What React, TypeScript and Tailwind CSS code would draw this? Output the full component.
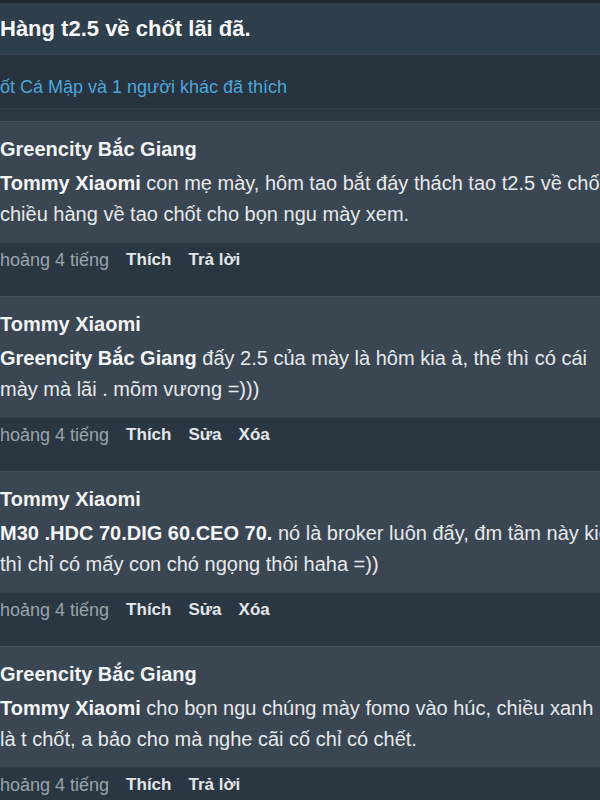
import React from 'react'

type Comment = {
  author: string
  mention: string
  lines: string[]
  actions: string[]
}

const comments: Comment[] = [
  {
    author: 'Greencity Bắc Giang',
    mention: 'Tommy Xiaomi',
    lines: ['con mẹ mày, hôm tao bắt đáy thách tao t2.5 về chốt', 'chiều hàng về tao chốt cho bọn ngu mày xem.'],
    actions: ['Thích', 'Trả lời'],
  },
  {
    author: 'Tommy Xiaomi',
    mention: 'Greencity Bắc Giang',
    lines: ['đấy 2.5 của mày là hôm kia à, thế thì có cái', 'mày mà lãi . mõm vương =)))'],
    actions: ['Thích', 'Sửa', 'Xóa'],
  },
  {
    author: 'Tommy Xiaomi',
    mention: 'M30 .HDC 70.DIG 60.CEO 70.',
    lines: ['nó là broker luôn đấy, đm tầm này kiếm', 'thì chỉ có mấy con chó ngọng thôi haha =))'],
    actions: ['Thích', 'Sửa', 'Xóa'],
  },
  {
    author: 'Greencity Bắc Giang',
    mention: 'Tommy Xiaomi',
    lines: ['cho bọn ngu chúng mày fomo vào húc, chiều xanh', 'là t chốt, a bảo cho mà nghe cãi cố chỉ có chết.'],
    actions: ['Thích', 'Trả lời'],
  },
]

const CommentItem: React.FC<{ c: Comment }> = ({ c }) => (
  <div>
    <div className="bg-[#3a4652] border-t border-[#43505b] pt-[12px] pb-[12px] whitespace-nowrap overflow-hidden">
      <div className="text-[20px] leading-[31px] font-bold text-[#f1f3f5]">{c.author}</div>
      <div className="mt-[3px] text-[20px] leading-[31px] text-[#e6e9ec]">
        <div>
          <span className="font-bold text-[#f4f6f8]">{c.mention}</span> {c.lines[0]}
        </div>
        <div>{c.lines[1]}</div>
      </div>
    </div>
    <div className="bg-[#2a3641] border-t border-[#33404b] h-[54px] pt-[5px] flex items-start gap-[17px] text-[17px] leading-[24px] whitespace-nowrap">
      <span className="text-[18px] text-[#9aa3ab]">hoảng 4 tiếng</span>
      {c.actions.map((a) => (
        <span key={a} className="font-bold text-[#e3e6e9]">
          {a}
        </span>
      ))}
    </div>
  </div>
)

export default function App() {
  return (
    <div
      className="w-[600px] h-[800px] overflow-hidden bg-[#2a3641]"
      style={{ fontFamily: '"Liberation Sans", Arial, sans-serif' }}
    >
      <div className="h-[3px] bg-[#1d2831]" />
      <div className="h-[50px] bg-[#2f3e4b] flex items-center text-[22px] font-bold text-[#f7f8fa] whitespace-nowrap">
        Hàng t2.5 về chốt lãi đã.
      </div>
      <div className="border-t-2 border-[#37444f] h-[55px] bg-[#27333e] flex items-end pb-[7px] text-[18px] text-[#4ea6dc] whitespace-nowrap">
        ốt Cá Mập và 1 người khác đã thích
      </div>
      <div className="h-[13px] bg-[#2c3843] border-t border-[#303c47]" />
      {comments.map((c, i) => (
        <CommentItem key={i} c={c} />
      ))}
    </div>
  )
}
